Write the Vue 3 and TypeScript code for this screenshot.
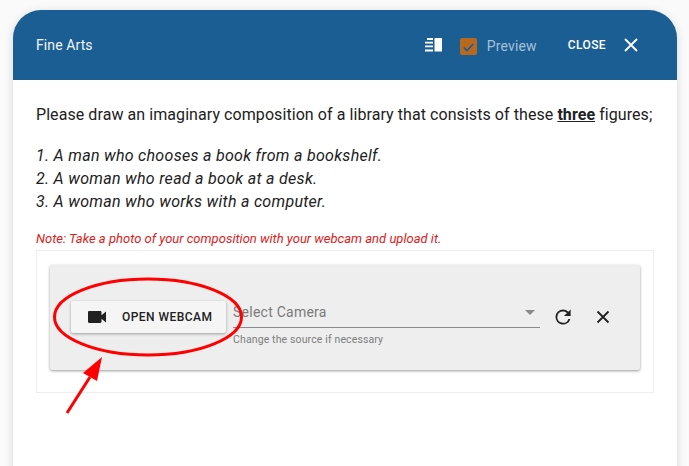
<script setup lang="ts">
const items: string[] = [
  '1. A man who chooses a book from a bookshelf.',
  '2. A woman who read a book at a desk.',
  '3. A woman who works with a computer.',
]
</script>

<template>
  <div class="page">
    <div class="dialog">
      <header class="bar">
        <span class="title">Fine Arts</span>
        <div class="tools">
          <svg class="layout-icon" width="18" height="14" viewBox="0 0 18 14">
            <path fill="#fff" d="M2 0h6v2H2zM0 3.800h8v1.700H0zM0 7.500h8v1.700H0zM0 11.500h8v2H0zM9.500 0H17v13.500H9.500z" />
          </svg>
          <span class="check">
            <svg width="18" height="18" viewBox="0 0 18 18">
              <path fill="none" stroke="#1b5e94" stroke-width="1.800" d="M4 9.300l3.400 3.400L14 5.800" />
            </svg>
          </span>
          <span class="preview">Preview</span>
          <span class="close">CLOSE</span>
          <svg class="x-icon" width="14" height="14" viewBox="0 0 14 14">
            <path fill="none" stroke="#fff" stroke-width="1.800" d="M1 1l12 12M13 1L1 13" />
          </svg>
        </div>
      </header>
      <main class="body">
        <p class="intro">Please draw an imaginary composition of a library that consists of these <b>three</b> figures;</p>
        <ol class="list">
          <li v-for="item in items" :key="item">{{ item }}</li>
        </ol>
        <p class="note">Note: Take a photo of your composition with your webcam and upload it.</p>
        <section class="frame">
          <div class="panel">
            <button class="webcam" type="button">
              <svg width="18" height="12" viewBox="0 0 18 12">
                <path fill="#212121" d="M0 1.200C0 .5.5 0 1.200 0h11.100c.7 0 1.200.5 1.200 1.200v3L18 .6v10.800l-4.500-3.600v3c0 .7-.5 1.200-1.200 1.200H1.200C.5 12 0 11.500 0 10.800z" />
              </svg>
              <span>OPEN WEBCAM</span>
            </button>
            <div class="field">
              <div class="select">
                <span>Select Camera</span>
                <i class="caret"></i>
              </div>
              <div class="hint">Change the source if necessary</div>
            </div>
            <svg class="act refresh" width="16" height="16" viewBox="0 0 18 18">
              <path fill="#212121" d="M15.300 2.700A8.900 8.900 0 0 0 9 .1a8.900 8.900 0 1 0 8.600 11.100h-2.300A6.700 6.700 0 1 1 9 2.300c1.850 0 3.500.77 4.700 2L10.100 7.900H18V0z" transform="translate(.5 .5) scale(.95)" />
            </svg>
            <svg class="act cross" width="14" height="14" viewBox="0 0 14 14">
              <path fill="none" stroke="#212121" stroke-width="1.800" d="M1.500 1.500l11 11M12.500 1.500l-11 11" />
            </svg>
          </div>
        </section>
      </main>
    </div>
    <svg class="marks" width="689" height="466" viewBox="0 0 689 466">
      <ellipse cx="148" cy="317" rx="93.500" ry="38" fill="none" stroke="#f00" stroke-width="3" />
      <path fill="none" stroke="#f00" stroke-width="3" d="M67 413L90 377" />
      <path fill="#f00" d="M102 357L83 373L97 381z" />
    </svg>
  </div>
</template>

<style>
html, body { margin: 0; padding: 0; background: #fafafa; overflow: hidden; }
</style>

<style scoped>
.page {
  position: relative;
  box-sizing: border-box;
  width: 689px;
  height: 466px;
  padding: 10px 12px 0 13px;
  overflow: hidden;
  font-family: Roboto, "Liberation Sans", sans-serif;
  color: #212121;
}
.dialog {
  height: 470px;
  background: #fff;
  border-radius: 28px 28px 0 0;
  box-shadow: 0 2px 10px rgba(0, 0, 0, 0.14);
  overflow: hidden;
}
.bar {
  height: 70px;
  background: #1b5e94;
  display: flex;
  align-items: center;
  justify-content: space-between;
  padding: 0 39px 0 23px;
  color: #fff;
}
.title { font-size: 14px; letter-spacing: 0.1px; color: #f1f5f8; }
.tools { display: flex; align-items: center; }
.layout-icon { margin-right: 17px; }
.check {
  width: 17px;
  height: 17px;
  border-radius: 2px;
  background: #b7691f;
  display: flex;
  align-items: center;
  justify-content: center;
  margin: 3px 10px 0 0;
}
.preview { font-size: 14px; color: #a6c1d7; letter-spacing: 0.15px; margin: 2px 31px 0 0; }
.close { font-size: 12px; font-weight: 500; letter-spacing: 0.4px; margin-right: 18px; }
.body { padding: 24px 23px 0; }
.intro { margin: 0; font-size: 16px; line-height: 22px; white-space: nowrap; letter-spacing: 0.07px; }
.intro b { font-weight: 700; text-decoration: underline; }
.list {
  list-style: none;
  margin: 18px 0 0;
  padding: 0;
  font-size: 16px;
  line-height: 23px;
  font-style: italic;
  letter-spacing: 0.29px;
}
.note {
  margin: 18px 0 0;
  font-size: 13px;
  line-height: 16px;
  font-style: italic;
  color: #e0201b;
}
.frame {
  margin-top: 3px;
  height: 143px;
  box-sizing: border-box;
  border: 1px solid #eee;
  padding: 14px 13px 0;
}
.panel {
  height: 105px;
  background: #eee;
  border-radius: 2px;
  box-shadow: 0 1px 3px rgba(0, 0, 0, 0.4);
  display: flex;
  align-items: flex-start;
}
.webcam {
  margin: 36px 0 0 21px;
  width: 155px;
  height: 32px;
  border: 0;
  border-radius: 2px;
  background: #f5f5f5;
  box-shadow: 0 1px 3px rgba(0, 0, 0, 0.35);
  display: flex;
  align-items: center;
  padding: 0 0 0 17px;
  font-family: inherit;
  font-size: 12px;
  font-weight: 500;
  letter-spacing: 0.45px;
  color: #212121;
}
.webcam span { margin-left: 16px; }
.field { margin: 32px 0 0 7px; width: 307px; }
.select {
  height: 31px;
  box-sizing: border-box;
  border-bottom: 1px solid #8a8a8a;
  display: flex;
  align-items: center;
  justify-content: space-between;
  font-size: 14px;
  letter-spacing: 0.25px;
  color: #7b7b7b;
}
.caret {
  width: 0;
  height: 0;
  margin: 0 5px 0 0;
  border-left: 5px solid transparent;
  border-right: 5px solid transparent;
  border-top: 5px solid #8a8a8a;
}
.hint { margin-top: 5px; font-size: 10.500px; line-height: 14px; letter-spacing: 0.13px; color: #7d7d7d; }
.act { flex: none; }
.refresh { margin: 44px 0 0 15px; }
.cross { margin: 45px 0 0 25px; }
.marks { position: absolute; left: 0; top: 0; pointer-events: none; }
</style>
